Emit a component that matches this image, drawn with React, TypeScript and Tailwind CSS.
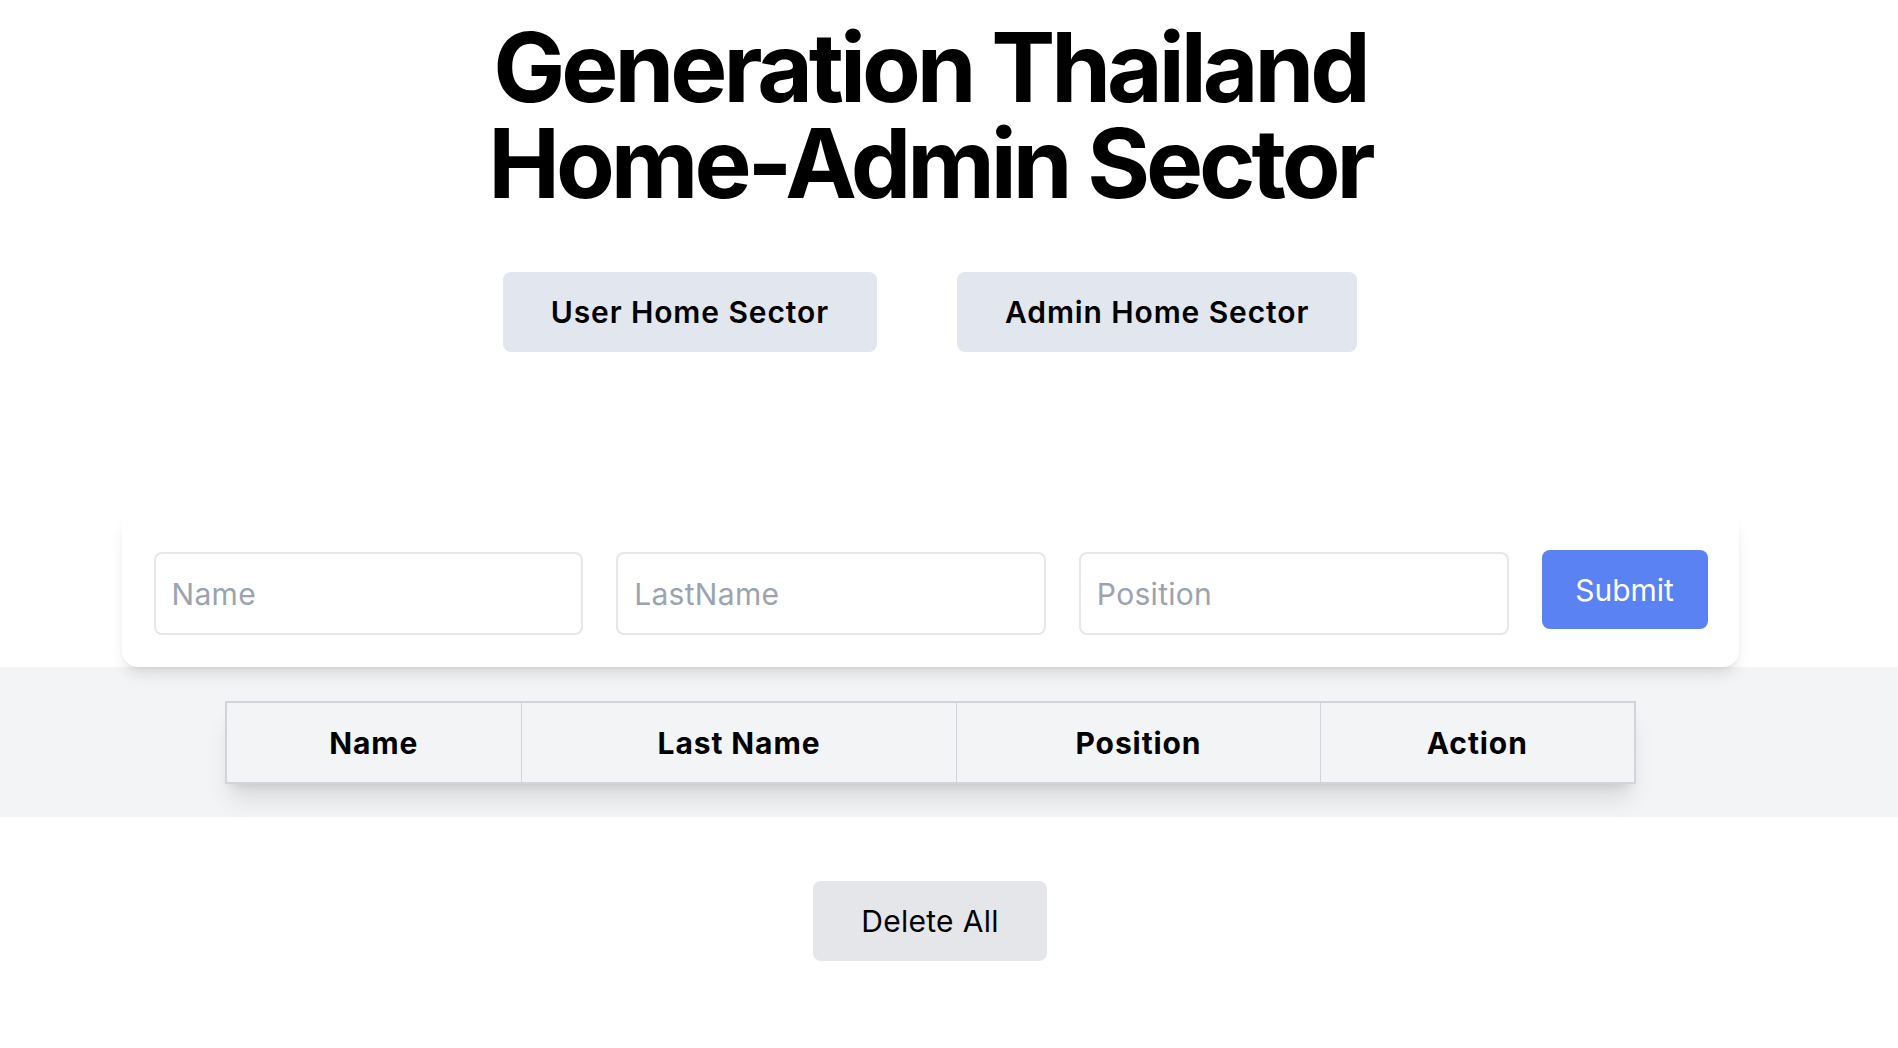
import { useState } from 'react'

const COLUMNS = [
  { label: 'Name', width: 'w-[296px]' },
  { label: 'Last Name', width: 'w-[435px]' },
  { label: 'Position', width: 'w-[364px]' },
  { label: 'Action', width: 'w-[314px]' },
]

const FIELDS = ['Name', 'LastName', 'Position']

export default function App() {
  const [form, setForm] = useState<Record<string, string>>({
    Name: '',
    LastName: '',
    Position: '',
  })

  return (
    <div className="min-h-screen bg-white font-['Inter',sans-serif] text-black">
      {/* Header */}
      <section className="w-[1860px] flex flex-col items-center pt-[19px]">
        <h1 className="text-8xl font-bold leading-none text-center tracking-[-0.042em]">
          Generation Thailand
          <br />
          Home-Admin Sector
        </h1>
        <div className="mt-[61px] flex gap-20">
          <button className="h-[80px] px-12 rounded-lg bg-[#e2e6ef] text-3xl font-semibold tracking-[0.03em]">
            User Home Sector
          </button>
          <button className="h-[80px] px-12 rounded-lg bg-[#e2e6ef] text-3xl font-semibold tracking-[0.03em]">
            Admin Home Sector
          </button>
        </div>
      </section>

      {/* Form card */}
      <section className="w-[1860px] mt-[160px] flex justify-center">
        <form
          className="relative z-10 w-[1617px] flex items-start gap-[33px] bg-white rounded-2xl shadow-lg pl-8 pr-[31px] pt-10 pb-8"
          onSubmit={(e) => e.preventDefault()}
        >
          {FIELDS.map((field) => (
            <input
              key={field}
              placeholder={field}
              value={form[field]}
              onChange={(e) => setForm({ ...form, [field]: e.target.value })}
              className="flex-1 min-w-0 h-[83px] px-4 border-2 border-[#e5e7eb] rounded-lg text-3xl tracking-[0.01em] placeholder:text-[#9ca3af] outline-none"
            />
          ))}
          <button
            type="submit"
            className="-mt-[2px] w-[166px] h-[79px] shrink-0 rounded-lg bg-[#5a82f2] text-white text-3xl"
          >
            Submit
          </button>
        </form>
      </section>

      {/* Table band */}
      <section className="bg-[#f3f4f6] pt-[34px] pb-[33px]">
        <div className="w-[1860px] flex justify-center">
          <table className="table-fixed border-collapse border-2 border-[#d1d5db] shadow-xl">
            <thead>
              <tr>
                {COLUMNS.map((col) => (
                  <th
                    key={col.label}
                    className={`${col.width} h-[81px] border border-[#d1d5db] bg-[#f3f4f6] text-3xl font-bold tracking-[0.03em]`}
                  >
                    {col.label}
                  </th>
                ))}
              </tr>
            </thead>
          </table>
        </div>
      </section>

      {/* Delete all */}
      <section className="w-[1860px] mt-16 flex justify-center">
        <button className="h-[80px] px-12 rounded-lg bg-[#e5e6ea] text-3xl tracking-[0.01em]">
          Delete All
        </button>
      </section>
    </div>
  )
}
